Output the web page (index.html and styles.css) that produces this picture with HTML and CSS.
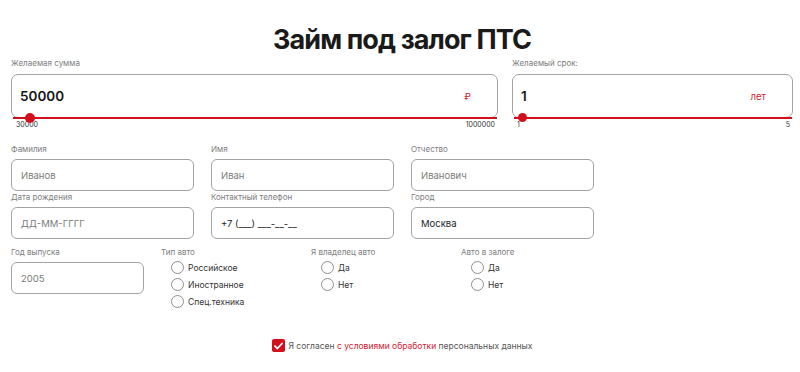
FILE: index.html
```html
<!DOCTYPE html>
<html lang="ru">
<head>
  <meta charset="UTF-8">
  <meta name="viewport" content="width=device-width, initial-scale=1.0">
  <title>Займ под залог ПТС</title>
  <link rel="stylesheet" href="styles.css">
</head>
<body>
  <div class="loanForm">
    <h1 class="formTitle">Займ под залог ПТС</h1>

    <div class="sliders">
      <div class="sliderField">
        <div class="fieldLabel">Желаемая сумма</div>
        <div class="sliderBox">
          <span class="sliderValue">50000</span>
          <span class="sliderUnit">₽</span>
          <div class="track"><span class="thumb big"></span></div>
        </div>
        <div class="limits"><span>30000</span><span>1000000</span></div>
      </div>
      <div class="sliderField">
        <div class="fieldLabel">Желаемый срок:</div>
        <div class="sliderBox">
          <span class="sliderValue">1</span>
          <span class="sliderUnit">лет</span>
          <div class="track"><span class="thumb"></span></div>
        </div>
        <div class="limits"><span>1</span><span>5</span></div>
      </div>
    </div>

    <div class="inputsGrid">
      <div class="field">
        <div class="fieldLabel">Фамилия</div>
        <div class="inputBox">Иванов</div>
      </div>
      <div class="field">
        <div class="fieldLabel">Имя</div>
        <div class="inputBox">Иван</div>
      </div>
      <div class="field">
        <div class="fieldLabel">Отчество</div>
        <div class="inputBox">Иванович</div>
      </div>
      <div class="field">
        <div class="fieldLabel">Дата рождения</div>
        <div class="inputBox">ДД-ММ-ГГГГ</div>
      </div>
      <div class="field">
        <div class="fieldLabel">Контактный телефон</div>
        <div class="inputBox filled">+7 (___) ___-__-__</div>
      </div>
      <div class="field">
        <div class="fieldLabel">Город</div>
        <div class="inputBox filled">Москва</div>
      </div>
    </div>

    <div class="carRow">
      <div class="field">
        <div class="fieldLabel">Год выпуска</div>
        <div class="inputBox">2005</div>
      </div>
      <div class="radioGroup">
        <div class="fieldLabel">Тип авто</div>
        <label class="radio"><span class="circle"></span>Российское</label>
        <label class="radio"><span class="circle"></span>Иностранное</label>
        <label class="radio"><span class="circle"></span>Спец.техника</label>
      </div>
      <div class="radioGroup">
        <div class="fieldLabel">Я владелец авто</div>
        <label class="radio"><span class="circle"></span>Да</label>
        <label class="radio"><span class="circle"></span>Нет</label>
      </div>
      <div class="radioGroup">
        <div class="fieldLabel">Авто в залоге</div>
        <label class="radio"><span class="circle"></span>Да</label>
        <label class="radio"><span class="circle"></span>Нет</label>
      </div>
    </div>

    <div class="agree">
      <span class="checkBox">
        <svg width="9" height="8" viewBox="0 0 9 8"><path d="M1 4.2 3.4 6.5 8 1.5" fill="none" stroke="#fff" stroke-width="1.8" stroke-linecap="round" stroke-linejoin="round"/></svg>
      </span>
      <span>Я согласен <span class="agreeLink">с условиями обработки</span> персональных данных</span>
    </div>
  </div>
</body>
</html>
```

FILE: styles.css
```css
body{
  margin: 0;
  background: #fff;
  font-family: Inter, "Noto Sans", sans-serif;
  color: #222;
}
.loanForm{
  padding: 0 7px 0 11px;
}
.formTitle{
  margin: 0;
  padding-top: 22px;
  text-align: center;
  font-size: 27px;
  line-height: 36px;
  font-weight: 700;
  letter-spacing: -0.9px;
  color: #1a1a1a;
}
.fieldLabel{
  font-size: 8px;
  line-height: 11px;
  color: #7d7d7d;
}
.sliders{
  display: grid;
  grid-template-columns: 487px 281px;
  gap: 14px;
}
.sliderField>.fieldLabel{
  margin-bottom: 5px;
}
.sliderBox{
  position: relative;
  height: 44px;
  box-sizing: border-box;
  border: 1px solid #a3a3a3;
  border-radius: 7px;
  display: flex;
  align-items: center;
  justify-content: space-between;
  padding: 0 26px 0 8px;
}
.sliderValue{
  font-size: 13.5px;
  font-weight: 600;
  color: #151515;
}
.sliderUnit{
  font-size: 9.5px;
  color: #d2202f;
}
.track{
  position: absolute;
  left: 1px;
  right: 0;
  bottom: -2px;
  height: 2px;
  background: #d40f1c;
}
.thumb{
  position: absolute;
  left: 4px;
  top: -4px;
  width: 9px;
  height: 9px;
  border-radius: 50%;
  background: #d40f1c;
}
.thumb.big{
  left: 12px;
  top: -4px;
  width: 10px;
  height: 10px;
}
.limits{
  display: flex;
  justify-content: space-between;
  padding: 2px 3px 0 5px;
  font-size: 7px;
  line-height: 9px;
  color: #333;
}
.inputsGrid{
  display: grid;
  grid-template-columns: repeat(3, 183px);
  column-gap: 17px;
  row-gap: 1px;
  margin-top: 15px;
}
.field>.fieldLabel{
  margin-bottom: 4px;
}
.inputBox{
  height: 32px;
  box-sizing: border-box;
  border: 1px solid #a3a3a3;
  border-radius: 6px;
  padding-left: 9px;
  display: flex;
  align-items: center;
  font-size: 9.5px;
  color: #7b7b7b;
}
.inputBox.filled{
  color: #1e1e1e;
}
.carRow{
  display: grid;
  grid-template-columns: repeat(4, 133px);
  column-gap: 17px;
  margin-top: 8px;
}
.radioGroup>.fieldLabel{
  margin-bottom: 1px;
}
.radio{
  display: flex;
  align-items: center;
  height: 17px;
  padding-left: 10px;
  font-size: 8.5px;
  color: #333;
}
.radio .circle{
  width: 11px;
  height: 11px;
  border: 1px solid #8e8e8e;
  border-radius: 50%;
  margin-right: 4px;
}
.agree{
  display: flex;
  align-items: center;
  justify-content: center;
  margin-top: 29px;
  font-size: 8.5px;
  color: #555;
}
.checkBox{
  width: 13px;
  height: 13px;
  border-radius: 2px;
  background: #d40f1c;
  display: flex;
  align-items: center;
  justify-content: center;
  margin-right: 4px;
}
.agreeLink{
  color: #d2202f;
}
```
